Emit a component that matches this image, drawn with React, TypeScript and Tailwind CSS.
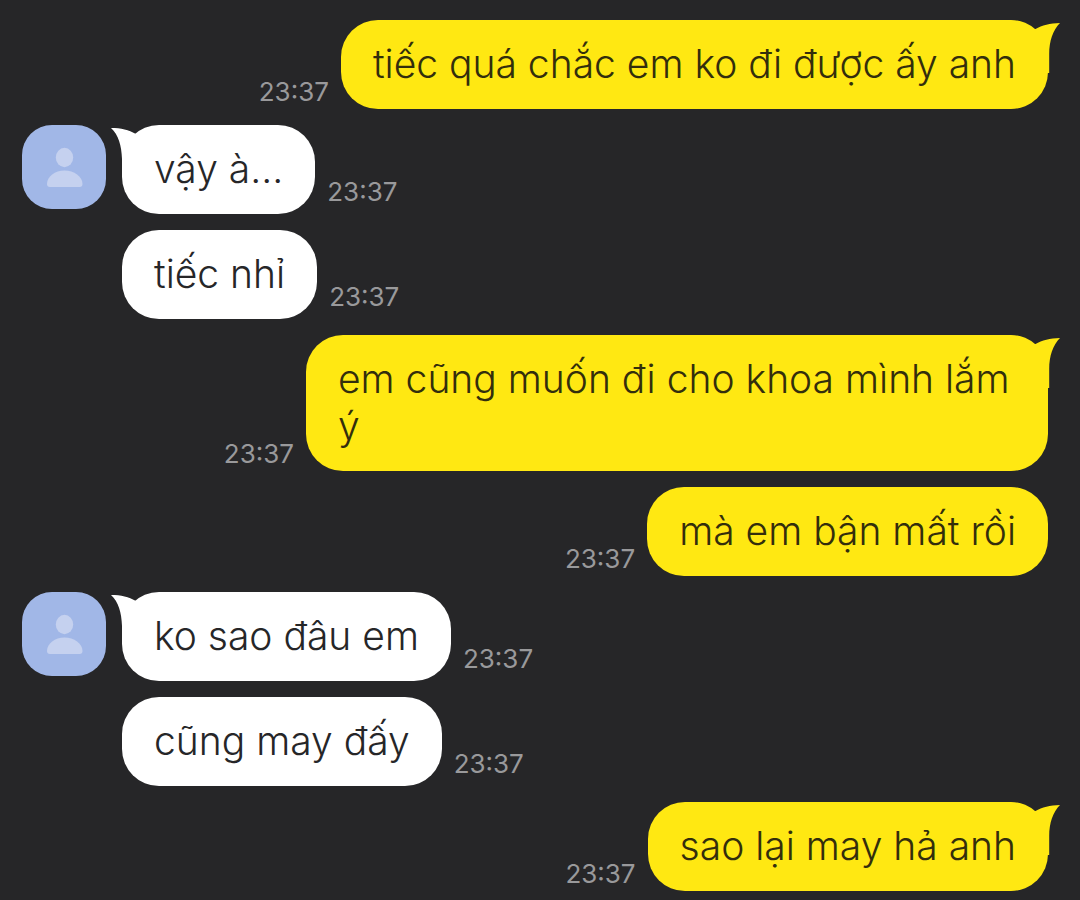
import clsx from 'clsx';

interface Message {
  id: number;
  text: string;
  time: string;
  mine: boolean;
  first: boolean;
}

const messages: Message[] = [
  { id: 1, text: 'tiếc quá chắc em ko đi được ấy anh', time: '23:37', mine: true, first: true },
  { id: 2, text: 'vậy à...', time: '23:37', mine: false, first: true },
  { id: 3, text: 'tiếc nhỉ', time: '23:37', mine: false, first: false },
  { id: 4, text: 'em cũng muốn đi cho khoa mình lắm ý', time: '23:37', mine: true, first: true },
  { id: 5, text: 'mà em bận mất rồi', time: '23:37', mine: true, first: false },
  { id: 6, text: 'ko sao đâu em', time: '23:37', mine: false, first: true },
  { id: 7, text: 'cũng may đấy', time: '23:37', mine: false, first: false },
  { id: 8, text: 'sao lại may hả anh', time: '23:37', mine: true, first: true },
];

function Avatar() {
  return (
    <div className="w-21 h-21 shrink-0 rounded-[30px] bg-[#a1b7e7]">
      <svg viewBox="0 0 84 84" className="h-full w-full" fill="#c5d1ef" aria-hidden="true">
        <ellipse cx="42.5" cy="32.5" rx="8.7" ry="9.7" />
        <path d="M25 59C25 51.5 33 45.5 42.5 45.5S60.5 51.5 60.5 59Q60.5 62 57.5 62H28Q25 62 25 59Z" />
      </svg>
    </div>
  );
}

function Tail({ mine }: { mine: boolean }) {
  if (mine) {
    return (
      <svg viewBox="0 0 40 56" className="absolute -right-3 top-0 h-14 w-10 text-[#ffe812]" fill="currentColor" aria-hidden="true">
        <path d="M15.5 9C22 5.5 30 3.2 40 3C33 10 29.2 21 29.2 34V53H8V9Z" />
      </svg>
    );
  }
  return (
    <svg viewBox="0 0 40 56" className="absolute -left-3 top-0 h-14 w-10 text-white" fill="currentColor" aria-hidden="true">
      <path d="M25.5 8.7C19 5 11 3 1 3C8.5 10 11.5 20 12 34V52H32V8.7Z" />
    </svg>
  );
}

function MessageRow({ message }: { message: Message }) {
  const { text, time, mine, first } = message;

  return (
    <li className={clsx('flex items-start', mine ? 'justify-end' : 'justify-start')}>
      {!mine && <div className="mr-4 w-21 shrink-0">{first && <Avatar />}</div>}
      <div className={clsx('flex items-end gap-3', mine && 'flex-row-reverse')}>
        <div
          className={clsx(
            'relative max-w-[742px] rounded-[37px] px-8 pt-5 pb-[22px]',
            mine ? 'bg-[#ffe812] text-[#332e0c]' : 'bg-white text-[#262628]'
          )}
        >
          {first && <Tail mine={mine} />}
          <p className="relative text-[39px] leading-[47px] font-[330]">{text}</p>
        </div>
        <time className={clsx('text-[26px] leading-[34px] text-[#99999b]', !mine && 'pb-[5px]')}>{time}</time>
      </div>
    </li>
  );
}

export default function App() {
  return (
    <main className="min-h-screen bg-[#262628] font-['Inter','Liberation_Sans',sans-serif]">
      <ul className="flex flex-col gap-4 pt-5 pr-8 pb-2 pl-[22px]">
        {messages.map((message) => (
          <MessageRow key={message.id} message={message} />
        ))}
      </ul>
    </main>
  );
}
